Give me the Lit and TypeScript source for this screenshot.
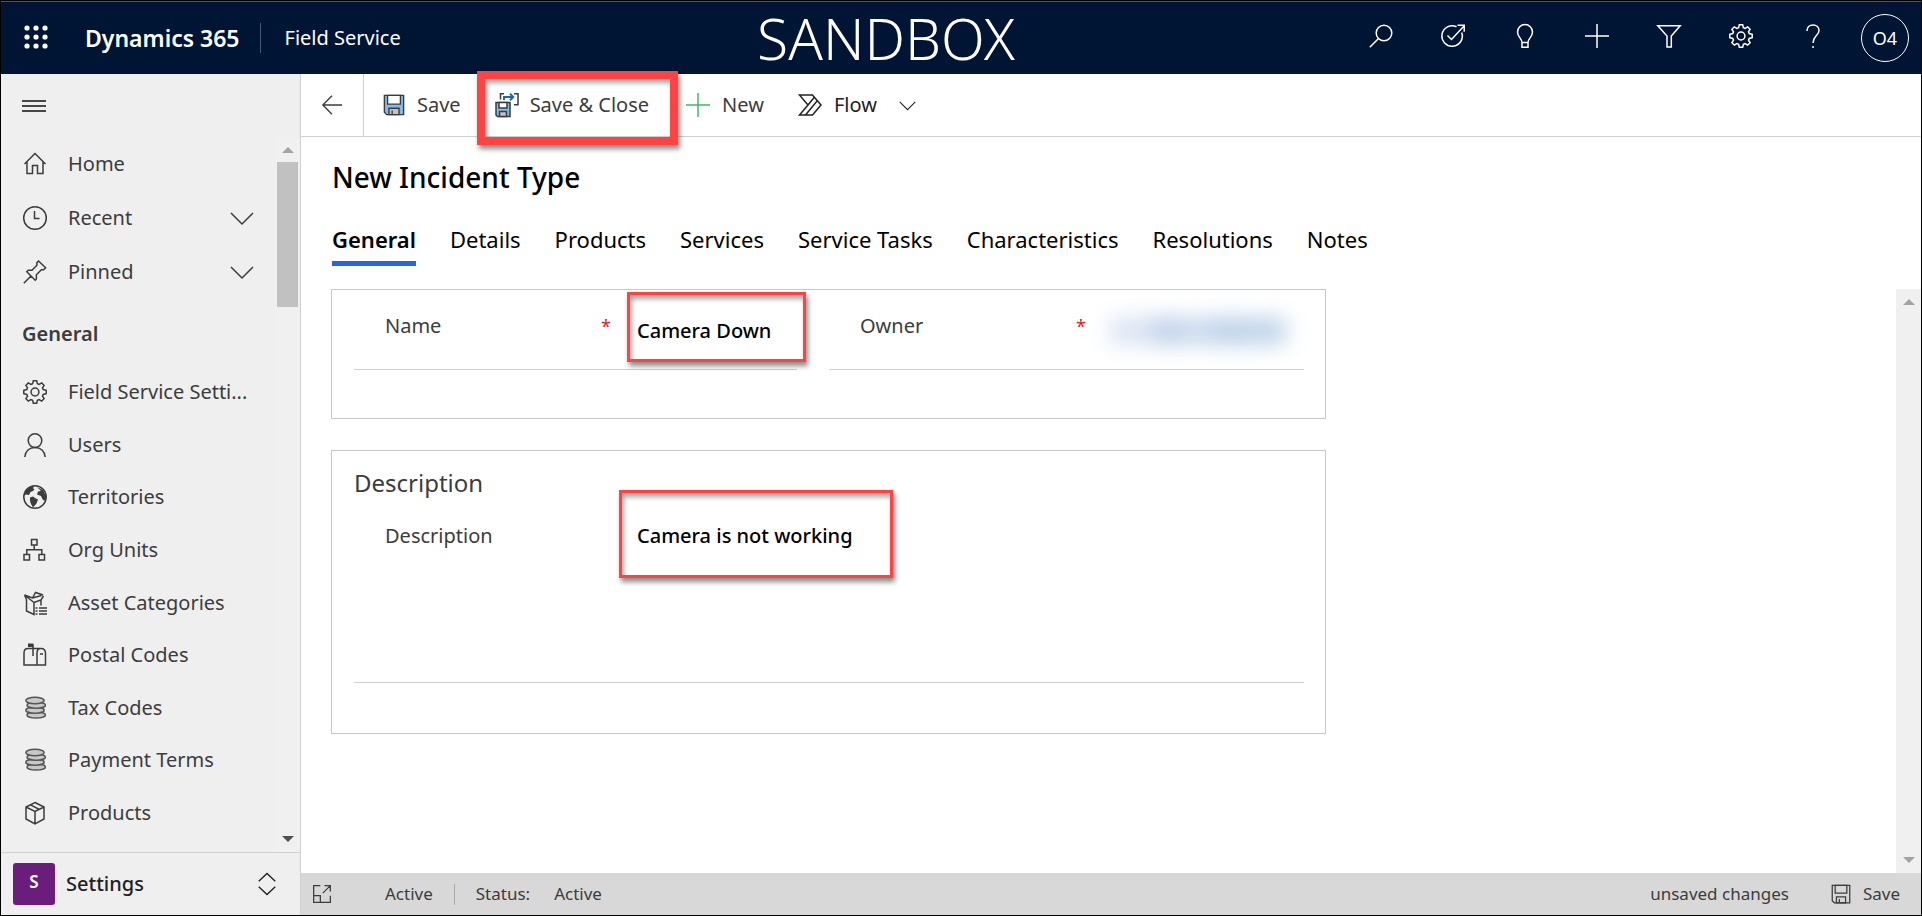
import { LitElement, html, css, svg } from "lit";
import { customElement } from "lit/decorators.js";

const stroke = (d: unknown, cls = "icon") => html`<svg class=${cls} viewBox="0 0 24 24" aria-hidden="true">${d}</svg>`;

const gearPath = svg`<path d="M10.3 0.8h3.4l.7 3 1.7.7 2.6-1.6 2.4 2.4-1.6 2.6.7 1.7 3 .7v3.4l-3 .7-.7 1.7 1.6 2.6-2.4 2.4-2.6-1.6-1.7.7-.7 3h-3.4l-.7-3-1.7-.7-2.6 1.6-2.4-2.4 1.6-2.6-.7-1.7-3-.7v-3.400l3-.7.7-1.700-1.600-2.600 2.400-2.400 2.600 1.600 1.700-.7z"/><circle cx="12" cy="12" r="3.900"/>`;
const coins = svg`<g class="coin"><ellipse cx="13.200" cy="19" rx="9.200" ry="3"/><ellipse cx="12" cy="14.200" rx="9.200" ry="3"/><ellipse cx="13.200" cy="9.200" rx="9.200" ry="3"/><ellipse cx="12" cy="4.500" rx="9.200" ry="3.200"/></g>`;

const icons: Record<string, unknown> = {
  home: svg`<path d="M1.500 12 12 1.500 22.500 12M4 10v11.500h5.500v-8h5v8H20V10"/>`,
  clock: svg`<circle cx="12" cy="12" r="11.300"/><path d="M11.500 5v7.500h5"/>`,
  pin: svg`<path d="M.8 23.200 8 16M3.800 11.800l8.400 8.400 1.200-1.200v-4.200l5-5h2.200l2-2L15.500 1l-1.600 1.600V5.200L9 10.300H5.200z"/>`,
  gear: gearPath,
  user: svg`<circle cx="12" cy="7.600" r="6.800"/><path d="M1.800 24c.4-6 4.600-9.600 10.200-9.600S21.800 18 22.200 24"/>`,
  globe: svg`<circle cx="12" cy="12" r="11.200"/><path class="solid" d="M3 5.500C6 2 9 1.200 11 1.200l-1 2 1.500 1L10 6l-2.500 1L6 10l-3-.5-2 1zM7 12.500l3-1 2 1.500 3 1.500-1.500 4L10 22.500 8 19l-1-3zM14 2l6 3 3 6v5l-3-1-2-4-4-1.500 1-3 3-.5z"/>`,
  org: svg`<path d="M8.500 1.500h5.500v5.500H8.500zM1 16.500h5.500V22H1zM16 16.500h5.500V22H16zM11.200 7v4.800M3.800 16.500v-4.700h15v4.700"/>`,
  asset: svg`<path d="M3.500 8.500v11.500l7.500 3.500V11.500L1.500 4l8 3 9-2.500M11 11.500l7-2.500 2.500-4M3.500 8.500 1.500 4M9.500 7l3-5.500 7.500 2.500M18 9v5.500"/><path d="M12.500 17h2M16 17h8M12.500 20h2M16 20h8M12.500 23h2M16 23h8"/>`,
  postal: svg`<path d="M5 5.500h13c2.800 0 4.500 2 4.500 5v11.500H1V10c0-2.500 1.500-4.500 4-4.500M14 22V10c0-2.500 1-4.500 3.500-4.500M10 13V2M17 11h3"/><path class="solid" d="M5 .5h5.500v3.500H5z"/>`,
  coins,
  box: svg`<path d="M12 1.500l9 4.500v12L12 23l-9-5V6zM3 6l9 4.500L21 6M12 10.500V23M7 3.700l9.500 4.800"/>`,
  search: svg`<circle cx="15" cy="9" r="7.800"/><path d="M9.500 14.500.8 23.200"/>`,
  task: svg`<path d="M20.700 8.500a10.200 10.200 0 1 1-5.200-5.700M6.500 11.500l4 4L23 2M16.500 1.200h6.700v6.500"/>`,
  bulb: svg`<path d="M9 18.500c0-4-4.500-5.500-4.500-10.500a7.500 7.500 0 0 1 15 0c0 5-4.500 6.500-4.500 10.500zM9 18.500v4.700h6v-4.700"/>`,
  plus: svg`<path d="M12 0v24M0 12h24"/>`,
  filter: svg`<path d="M.8 1.700h22.400L14.300 12v11H10V12z"/>`,
  help: svg`<path d="M6 7c0-3.800 2.500-6 6-6s6 2.200 6 5.500c0 5-6 5.500-6 12.500M12 22v2"/>`,
  back: svg`<path d="M23 12H2M12 2 2 12l10 10"/>`,
  chevron: svg`<path d="M1 7l11 11L23 7"/>`,
  burger: svg`<path d="M0 7h24M0 12h24M0 17h24"/>`,
  flow: svg`<path d="M1.500 2h13L23 12l-8.500 10h-13L10 12zM10 12l6.500-8M7.500 22 19.500 7.500"/>`,
  updown: svg`<path d="M3 9l9-8.500L21 9M3 15l9 8.500L21 15"/>`,
  pop: svg`<path d="M10 2H2v20h20v-8M2 14h8v8M13 11 22 2M15 2h7v7"/>`,
  save: svg`<path class="disk" d="M1.500 1.500h21v21H4l-2.500-2.500z"/><path class="paper" d="M5 1.500h14v9.500H5z"/><path class="metal" d="M6.500 15.500h11v7h-11z"/><path d="M10 18v4"/>`,
  saveclose: svg`<path class="disk" d="M1 9.500h14v14H2.500L1 22z"/><path class="paper" d="M4 9.500h8v5.500H4z"/><path class="metal" d="M4.500 18.500h7v5h-7z"/><path d="M5.500 6.500V.8H9M19 .8h4v11h-4"/><path class="arrow" d="M9 7V4h9M15 .8 18.200 4 15 7.200"/>`,
};

@customElement("app-root")
export class AppRoot extends LitElement {
  static styles = css`
    :host { display: block; height: 100vh; font-family: "Noto Sans", sans-serif; font-size: 20px; line-height: 28px; color: #3c3c3c; }
    * { box-sizing: border-box; }
    button, input, textarea { font: inherit; color: inherit; background: none; border: 0; margin: 0; padding: 0; }
    textarea { resize: none; }
    a { color: inherit; text-decoration: none; }
    h1, h2, h3 { margin: 0; font-weight: 400; }
    .icon { width: 24px; height: 24px; flex: none; display: block; fill: none; stroke: currentColor; stroke-width: 1.5; overflow: visible; }
    .solid { fill: currentColor; stroke: none; }
    .coin { fill: #c8c8c8; stroke: #555; }
    .small { width: 20px; height: 20px; }
    .mid { width: 22px; height: 22px; }
    .page { height: 100%; display: grid; grid-template: auto 1fr / 300px 1fr; border: 1px solid #000; background: #fff; }
    .top { grid-column: 1 / -1; height: 73px; display: flex; align-items: center; position: relative; background: #001433; color: #fff; border-top: 1px solid #555; padding: 0 12px 0 23px; }
    .brand { font-size: 23px; font-weight: 600; margin-left: 37px; }
    .divider { width: 1px; height: 30px; background: #4a5770; margin: 0 24px 0 20px; }
    .env { position: absolute; left: 0; right: 0; text-align: center; font-size: 57px; line-height: 72px; font-weight: 300; pointer-events: none; padding-right: 150px; }
    .tools { margin-left: auto; display: flex; gap: 48px; align-items: center; }
    .tool { padding-bottom: 4px; }
    .avatar { width: 48px; height: 48px; border: 1px solid #fff; border-radius: 50%; margin-left: -12px; font-size: 18px; }
    .side { background: #efefef; border-right: 1px solid #d0d0d0; display: flex; flex-direction: column; min-height: 0; }
    .burger { padding: 19px 21px; height: 63px; color: #111; }
    .navwrap { flex: 1; display: flex; min-height: 0; }
    .nav { flex: 1; display: flex; flex-direction: column; padding-bottom: 13px; min-width: 0; }
    .nav a { flex: 1; display: flex; align-items: center; padding: 0 21px 0 22px; gap: 21px; min-width: 0; }
    .nav .fixed { flex: 0 0 54px; }
    .nav .chev { margin-left: auto; }
    .clip { white-space: nowrap; }
    .nav h2 { font-size: 20px; font-weight: 600; padding: 21px 21px 18px; }
    .bar { width: 25px; background: #f0f0f0; display: flex; flex-direction: column; align-items: center; padding: 10px 0; }
    .up, .down { border: 6px solid transparent; width: 0; height: 0; }
    .up { border-top-width: 0; border-bottom-color: #a3a3a3; }
    .down { border-bottom-width: 0; border-top-color: #a3a3a3; margin-top: auto; }
    .dark { border-top-color: #505050; }
    .thumb { width: 21px; height: 145px; margin-top: 9px; background: #c1c1c1; }
    .area { height: 63px; border-top: 1px solid #d0d0d0; display: flex; align-items: center; padding: 0 22px 0 12px; width: 100%; text-align: left; color: #222; }
    .tile { width: 42px; height: 42px; border-radius: 3px; background: #6b1d7b; color: #fff; text-align: center; line-height: 38px; font-size: 17px; font-weight: 600; }
    .areaname { font-weight: 500; margin-left: 11px; flex: 1; }
    .main { display: flex; flex-direction: column; min-width: 0; min-height: 0; }
    .cmds { height: 63px; border-bottom: 1px solid #d0d0d0; display: flex; align-items: stretch; }
    .cmds button { display: flex; align-items: center; gap: 12px; }
    .cmds .back { width: 63px; justify-content: center; border-right: 1px solid #d0d0d0; margin-right: 19px; }
    .disk { fill: #83bbec; }
    .paper { fill: #fff; }
    .metal { fill: #c4c0be; }
    .arrow { stroke: #1868b5; stroke-width: 2; }
    .gray .disk, .gray .paper, .gray .metal { fill: none; }
    .green { stroke: #3fb56b; }
    .cmds .hot { position: relative; gap: 11px; margin: 0 37px 0 34px; }
    .hot::after, .ring { content: ""; position: absolute; border: 3px solid #ff4343; box-shadow: 2px 4px 5px rgba(0,0,0,.45), inset 2px 4px 5px rgba(0,0,0,.35); pointer-events: none; }
    .hot::after { border-width: 8px; inset: -3px -29px -9px -18px; z-index: 2; }
    .cmds .flow { margin-left: 34px; color: #222; }
    .flow .caret { width: 17px; height: 17px; margin-left: 10px; }
    .head { padding: 24px 0 0 31px; color: #000; }
    h1 { font-size: 28px; line-height: 32px; font-weight: 500; }
    .tabs { display: flex; gap: 34px; padding: 24px 0 23px; font-size: 22px; }
    .tabs button { height: 49px; border-bottom: 5px solid transparent; white-space: nowrap; }
    .tabs .on { font-weight: 600; border-color: #2266e3; }
    .body { flex: 1; display: flex; min-height: 0; }
    .form { flex: 1; padding-left: 30px; }
    .card { width: 63.6%; border: 1px solid #c8c8c8; padding: 0 21px 0 22px; margin-bottom: 31px; }
    .two { display: grid; grid-template-columns: 443px minmax(0, 1fr); gap: 32px; height: 130px; align-items: start; }
    .field { height: 80px; border-bottom: 1px solid #d0d0d0; display: flex; padding: 22px 0 0 31px; position: relative; }
    .field label { flex: 0 0 216px; }
    .star { color: #e02020; flex: 0 0 36px; font-size: 18px; }
    .val { color: #000; font-weight: 500; flex: 1; min-width: 0; height: 36px; }
    .ring { inset: 2px -9px 7px 273px; }
    .smear { flex: 1; min-width: 0; height: 30px; filter: blur(10px); background: linear-gradient(90deg, #dfe6f4 0 20%, #c0d3ea 30%, #d0deef 50%, #c0d3ea 65%, #c8daec); border-radius: 12px; margin: 4px 16px 0 -4px; }
    h3 { font-size: 24px; line-height: 32px; padding: 16px 0 16px; }
    .desc { height: 168px; border-bottom: 1px solid #d0d0d0; margin-bottom: 50px; padding-top: 7px; }
    .desc label { flex-basis: 252px; }
    .desc .val { height: 140px; }
    .desc .ring { inset: -25px auto auto 265px; width: 274px; height: 88px; }
    .status { height: 42px; background: #d8d8d8; display: flex; align-items: center; font-size: 17px; padding: 0 21px 0 11px; }
    .state { margin-left: 53px; }
    .sep { width: 1px; height: 21px; background: #aaa; margin: 0 21px; }
    .value { margin-left: 24px; flex: 1; }
    .status button { display: flex; align-items: center; gap: 12px; }
    .status .save { margin-left: 42px; }
  `;

  private link(icon: string, text: string, fixed = false, chev = false) {
    return html`<a class=${fixed ? "fixed" : ""} href="#">${stroke(icons[icon])}<span class="clip">${text}</span>${chev ? stroke(icons.chevron, "icon chev") : ""}</a>`;
  }

  render() {
    const tools: [string, string][] = [["search", "Search"], ["task", "Assistant"], ["bulb", "Ideas"], ["plus", "Create"], ["filter", "Filter"], ["gear", "Settings"], ["help", "Help"]];
    const entries: [string, string][] = [["gear", "Field Service Setti..."], ["user", "Users"], ["globe", "Territories"], ["org", "Org Units"], ["asset", "Asset Categories"], ["postal", "Postal Codes"], ["coins", "Tax Codes"], ["coins", "Payment Terms"], ["box", "Products"]];
    const tabs = ["General", "Details", "Products", "Services", "Service Tasks", "Characteristics", "Resolutions", "Notes"];
    const dots = [0, 1, 2].flatMap((r) => [0, 1, 2].map((c) => svg`<circle class="solid" cx=${3 + c * 9} cy=${2 + r * 9} r="2.600"/>`));
    return html`<div class="page">
      <header class="top">
        <button aria-label="Apps">${stroke(dots)}</button>
        <a class="brand" href="#">Dynamics 365</a><span class="divider"></span><a href="#">Field Service</a>
        <span class="env">SANDBOX</span>
        <div class="tools">${tools.map(([i, l]) => html`<button class="tool" aria-label=${l}>${stroke(icons[i])}</button>`)}<button class="avatar">O4</button></div>
      </header>
      <aside class="side">
        <button class="burger" aria-label="Menu">${stroke(icons.burger)}</button>
        <div class="navwrap">
          <nav class="nav">
            ${this.link("home", "Home", true)}${this.link("clock", "Recent", true, true)}${this.link("pin", "Pinned", true, true)}
            <h2>General</h2>
            ${entries.map(([i, l]) => this.link(i, l))}
          </nav>
          <div class="bar"><span class="up"></span><span class="thumb"></span><span class="down dark"></span></div>
        </div>
        <button class="area"><span class="tile">S</span><span class="areaname">Settings</span>${stroke(icons.updown, "icon mid")}</button>
      </aside>
      <main class="main">
        <div class="cmds">
          <button class="back" aria-label="Back">${stroke(icons.back, "icon mid")}</button>
          <button>${stroke(icons.save, "icon mid")}Save</button>
          <button class="hot">${stroke(icons.saveclose)}Save &amp; Close</button>
          <button>${stroke(icons.plus, "icon green")}New</button>
          <button class="flow">${stroke(icons.flow)}Flow${stroke(icons.chevron, "icon caret")}</button>
        </div>
        <div class="head">
          <h1>New Incident Type</h1>
          <div class="tabs">${tabs.map((t, i) => html`<button class=${i ? "" : "on"}>${t}</button>`)}</div>
        </div>
        <div class="body">
          <div class="form">
            <section class="card two">
              <div class="field"><label for="name">Name</label><span class="star">*</span><input class="val" id="name" value="Camera Down"><span class="ring"></span></div>
              <div class="field"><label for="owner">Owner</label><span class="star">*</span><input class="smear" id="owner" readonly></div>
            </section>
            <section class="card">
              <h3>Description</h3>
              <div class="field desc"><label for="desc">Description</label><textarea class="val" id="desc">Camera is not working</textarea><span class="ring"></span></div>
            </section>
          </div>
          <div class="bar"><span class="up"></span><span class="down"></span></div>
        </div>
        <footer class="status">
          <button aria-label="Open in new window">${stroke(icons.pop, "icon small")}</button>
          <span class="state">Active</span><span class="sep"></span><span>Status:</span><span class="value">Active</span>
          <span>unsaved changes</span><button class="save">${stroke(icons.save, "icon small gray")}Save</button>
        </footer>
      </main>
    </div>`;
  }
}
